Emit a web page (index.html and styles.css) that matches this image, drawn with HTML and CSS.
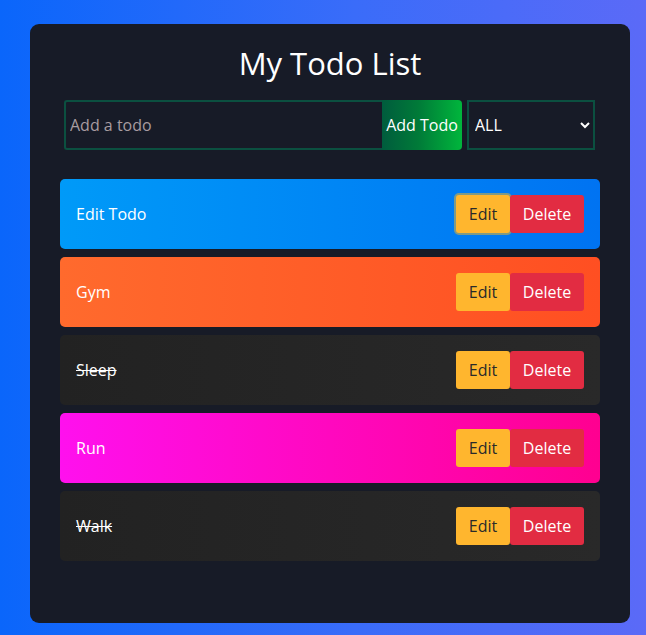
FILE: index.html
```html
<!DOCTYPE html>
<html>
<head>
<meta charset="utf-8">
<link rel="stylesheet" href="styles.css">
</head>
<body>
<div class="card">
  <h1 class="title">My Todo List</h1>
  <div class="form-row">
    <div class="add-group">
      <input class="todo-input" type="text" placeholder="Add a todo">
      <button class="add-btn">Add Todo</button>
    </div>
    <select class="filter">
      <option>ALL</option>
    </select>
  </div>
  <ul class="list">
    <li class="item blue"><span class="label">Edit Todo</span><div class="actions"><button class="edit focused">Edit</button><button class="del">Delete</button></div></li>
    <li class="item orange"><span class="label">Gym</span><div class="actions"><button class="edit">Edit</button><button class="del">Delete</button></div></li>
    <li class="item dark"><span class="label done">Sleep</span><div class="actions"><button class="edit">Edit</button><button class="del">Delete</button></div></li>
    <li class="item pink"><span class="label">Run</span><div class="actions"><button class="edit">Edit</button><button class="del">Delete</button></div></li>
    <li class="item dark"><span class="label done">Walk</span><div class="actions"><button class="edit">Edit</button><button class="del">Delete</button></div></li>
  </ul>
</div>
</body>
</html>
```

FILE: styles.css
```css
* { box-sizing: border-box; }
html, body { margin: 0; height: 100%; }
body {
  background: linear-gradient(90deg, #0a66fb 0%, #3a6cf9 55%, #5b6af7 100%);
  font-family: "Open Sans", "DejaVu Sans", sans-serif;
  padding: 24px 16px 12px 30px;
}
.card {
  width: 600px;
  height: 599px;
  background: #171b27;
  border-radius: 9px;
  padding: 20px 30px 30px;
}
.title {
  margin: 0;
  text-align: center;
  color: #fff;
  font-weight: 400;
  font-size: 31px;
  line-height: 38px;
}
.form-row {
  display: flex;
  margin: 18px 5px 0 4px;
  gap: 5px;
  height: 50px;
}
.add-group {
  display: flex;
  width: 398px;
}
.todo-input {
  flex: 1;
  min-width: 0;
  background: #171b27;
  border: 2px solid #0b5040;
  border-right: none;
  color: #fff;
  font-family: inherit;
  font-size: 16px;
  padding: 0 4px;
  outline: none;
  border-radius: 3px 0 0 3px;
}
.todo-input::placeholder { color: #a89ca0; }
.add-btn {
  width: 80px;
  border: none;
  color: #fff;
  font-family: inherit;
  font-size: 16px;
  padding: 0;
  background: linear-gradient(90deg, #005c3d 0%, #007a38 45%, #00b63c 100%);
  border-radius: 0 4px 4px 0;
}
.filter {
  width: 128px;
  background: #171b27;
  border: 2px solid #0b5040;
  color: #fff;
  font-family: inherit;
  font-size: 16px;
  padding: 0 2px;
  border-radius: 0;
}
.list {
  list-style: none;
  margin: 29px 0 0;
  padding: 0;
  display: flex;
  flex-direction: column;
  gap: 8px;
}
.item {
  height: 70px;
  border-radius: 5px;
  display: flex;
  align-items: center;
  justify-content: space-between;
  padding: 0 16px;
  color: #fff;
  font-size: 16px;
}
.blue { background: linear-gradient(90deg, #009af8, #0073f2); }
.orange { background: linear-gradient(90deg, #ff6a2d, #ff4f22); }
.dark { background: linear-gradient(90deg, #222222, #292929); }
.pink { background: linear-gradient(90deg, #ff10ee, #ff0090); }
.done { text-decoration: line-through; }
.actions { display: flex; }
.actions button {
  height: 38px;
  border: none;
  font-family: inherit;
  font-size: 16px;
  padding: 0;
  border-radius: 3px;
}
.edit {
  width: 54px;
  background: #ffb62e;
  color: #2a2a2a;
}
.edit.focused { box-shadow: 0 0 0 2px #7f9a86; }
.del {
  width: 74px;
  background: #e22c42;
  color: #fff;
}
```
